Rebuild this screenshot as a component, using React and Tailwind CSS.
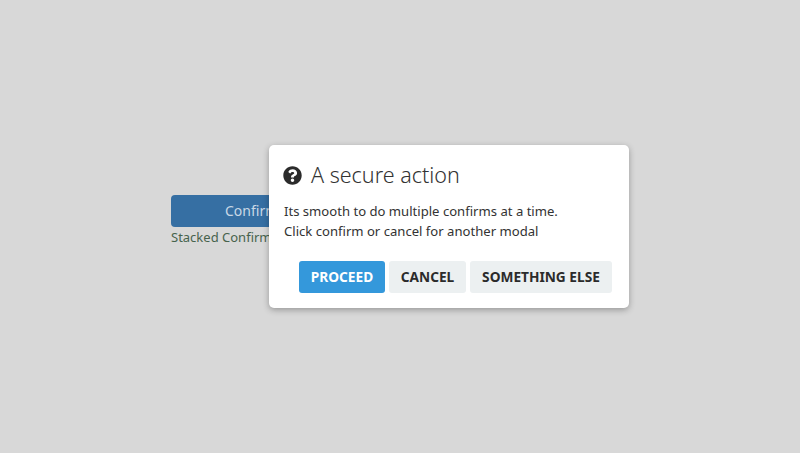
import React from 'react';

const font = "font-['Noto_Sans','Open_Sans',sans-serif]";

const QuestionIcon = () => (
  <svg viewBox="0 0 512 512" className="w-[19px] h-[19px] -ml-[1px] shrink-0" fill="#2b2b2b">
    <path d="M504 256c0 137-111 248-248 248S8 393 8 256C8 119 119 8 256 8s248 111 248 248zM262.700 90c-54.500 0-89.300 23-116.500 63.800-3.500 5.300-2.400 12.400 2.700 16.300l34.700 26.300c5.200 3.900 12.600 3 16.700-2.100 17.900-22.700 30.100-35.800 57.300-35.800 20.400 0 45.700 13.100 45.700 32.900 0 15-12.400 22.700-32.600 34-23.600 13.200-54.800 29.700-54.800 70.900V300c0 6.600 5.400 12 12 12h56c6.600 0 12-5.400 12-12v-1.300c0-28.600 83.500-29.800 83.500-107.200C379.400 133.200 318.900 90 262.700 90zM256 339c-25.400 0-46 20.600-46 46 0 25.400 20.600 46 46 46s46-20.600 46-46c0-25.400-20.600-46-46-46z" />
  </svg>
);

export default function App() {
  return (
    <div className={`relative w-full h-[453px] overflow-hidden bg-[#d8d8d8] ${font}`}>
      <div className="pl-[171px] pt-[195px] w-[629px]">
        <button className="w-full h-[32px] pl-[54px] pb-[1px] text-left text-[14px] text-[#c9d8e6] bg-[#366fa3] rounded-[4px]">
          Confirm
        </button>
        <p className="mt-[1px] text-[13px] leading-[18px] text-[#47634d]">Stacked Confirm</p>
      </div>

      <div className="absolute left-[269px] top-[145px] w-[360px] h-[163px] bg-white rounded-[5px] shadow-[0_2px_6px_rgba(0,0,0,0.3)] px-[15px] pt-[15px]">
        <div className="flex items-center gap-[9px] h-[30px]">
          <QuestionIcon />
          <h2 className="text-[21.5px] leading-[30px] font-light text-[#333333]">A secure action</h2>
        </div>
        <div className="mt-[11px] text-[13.1px] leading-[20px] text-[#333333]">
          <p>Its smooth to do multiple confirms at a time.</p>
          <p>Click confirm or cancel for another modal</p>
        </div>
        <div className="mt-[20px] flex justify-end gap-[4px] pr-[2px]">
          <button className="h-[32px] w-[86px] rounded-[3px] bg-[#3498db] text-[13.7px] font-bold text-white">PROCEED</button>
          <button className="h-[32px] w-[77px] rounded-[3px] bg-[#ecf0f1] text-[13.7px] font-bold text-[#2b2b2b]">CANCEL</button>
          <button className="h-[32px] w-[142px] rounded-[3px] bg-[#ecf0f1] text-[13.7px] font-bold text-[#2b2b2b]">SOMETHING ELSE</button>
        </div>
      </div>
    </div>
  );
}
